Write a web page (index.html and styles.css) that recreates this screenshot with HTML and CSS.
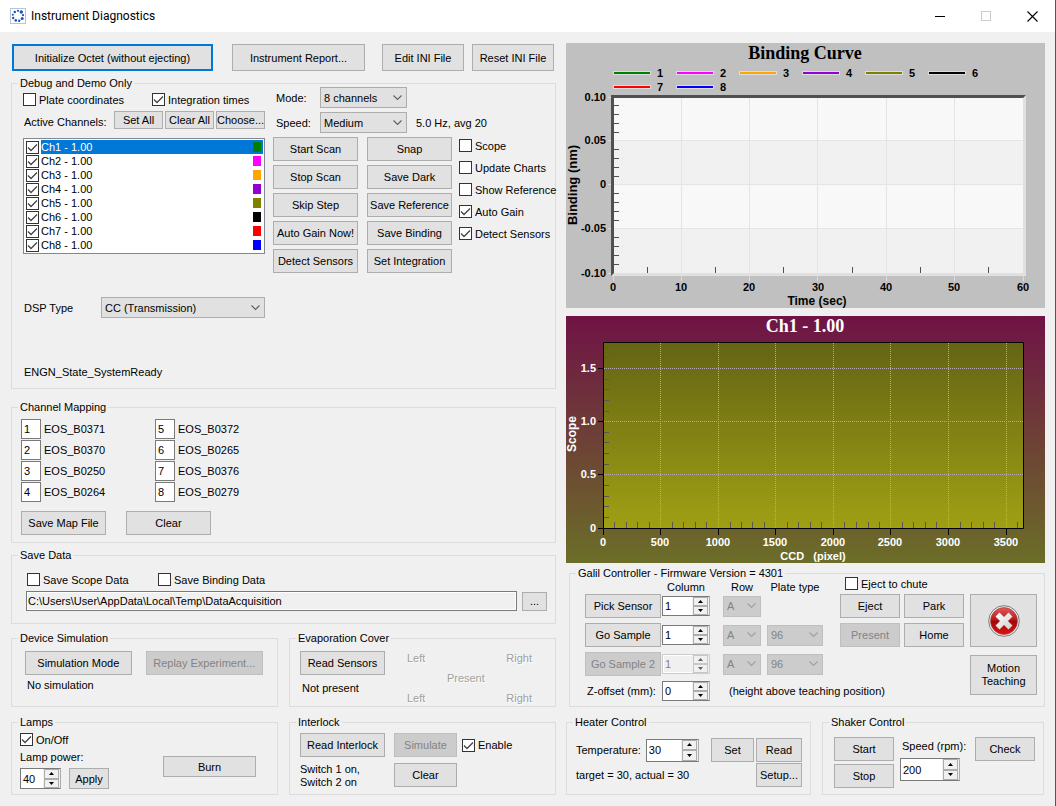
FILE: index.html
```html
<!DOCTYPE html>
<html lang="en">
<head>
<meta charset="utf-8">
<title>Instrument Diagnostics</title>
<link rel="stylesheet" href="styles.css">
</head>
<body>
<header class="titlebar">
  <svg class="app-icon" width="16" height="16" viewBox="0 0 16 16" aria-hidden="true">
    <rect x=".5" y=".5" width="15" height="15" fill="#fff" stroke="#b4c6d6"/>
    <g fill="#1f4fc8">
      <circle cx="8" cy="2.8" r="1.1"/><circle cx="11.3" cy="4" r="1.7"/><circle cx="13" cy="7.2" r="1.1"/><circle cx="12.2" cy="10.6" r="1.5"/>
      <circle cx="9.2" cy="12.8" r="1.2"/><circle cx="5.8" cy="12.4" r="1.3"/><circle cx="3.2" cy="10" r="1.2"/><circle cx="2.8" cy="6.8" r="1"/><circle cx="4.8" cy="4" r="1.2"/>
    </g>
  </svg>
  <h1>Instrument Diagnostics</h1>
  <div class="window-buttons">
    <button aria-label="Minimize"><svg width="11" height="11" viewBox="0 0 11 11"><path d="M0 5.5h10" stroke="#000"/></svg></button>
    <button aria-label="Maximize"><svg width="11" height="11" viewBox="0 0 11 11"><rect x=".5" y=".5" width="9" height="9" fill="none" stroke="#ccc"/></svg></button>
    <button aria-label="Close"><svg width="11" height="11" viewBox="0 0 11 11"><path d="M.5.5l10 10M10.5.5l-10 10" stroke="#000" stroke-width="1.1"/></svg></button>
  </div>
</header>

<main class="panes">
  <div class="pane-left">
    <div class="top-buttons">
      <button class="btn btn-default init">Initialize Octet (without ejecting)</button>
      <button class="btn report">Instrument Report...</button>
      <button class="btn ini">Edit INI File</button>
      <button class="btn ini">Reset INI File</button>
    </div>

    <fieldset class="group debug">
      <legend>Debug and Demo Only</legend>
      <div class="debug-body">
        <div class="channels">
          <div class="check-pair">
            <label class="check"><input type="checkbox">Plate coordinates</label>
            <label class="check"><input type="checkbox" checked>Integration times</label>
          </div>
          <div class="active-row">
            <span>Active Channels:</span>
            <button class="btn">Set All</button>
            <button class="btn">Clear All</button>
            <button class="btn">Choose...</button>
          </div>
          <ul class="channel-list">
            <li class="selected"><label class="check"><input type="checkbox" checked><span>Ch1 - 1.00</span></label><i class="swatch green"></i></li>
            <li><label class="check"><input type="checkbox" checked><span>Ch2 - 1.00</span></label><i class="swatch magenta"></i></li>
            <li><label class="check"><input type="checkbox" checked><span>Ch3 - 1.00</span></label><i class="swatch orange"></i></li>
            <li><label class="check"><input type="checkbox" checked><span>Ch4 - 1.00</span></label><i class="swatch violet"></i></li>
            <li><label class="check"><input type="checkbox" checked><span>Ch5 - 1.00</span></label><i class="swatch olive"></i></li>
            <li><label class="check"><input type="checkbox" checked><span>Ch6 - 1.00</span></label><i class="swatch black"></i></li>
            <li><label class="check"><input type="checkbox" checked><span>Ch7 - 1.00</span></label><i class="swatch red"></i></li>
            <li><label class="check"><input type="checkbox" checked><span>Ch8 - 1.00</span></label><i class="swatch blue"></i></li>
          </ul>
          <div class="dsp-row">
            <label for="dsp">DSP Type</label>
            <select id="dsp"><option>CC (Transmission)</option></select>
          </div>
          <p class="state">ENGN_State_SystemReady</p>
        </div>

        <div class="scan">
          <div class="scan-settings">
            <label for="mode">Mode:</label>
            <select id="mode"><option>8 channels</option></select>
            <span></span>
            <label for="speed">Speed:</label>
            <select id="speed"><option>Medium</option></select>
            <span>5.0 Hz, avg 20</span>
          </div>
          <div class="scan-controls">
            <div class="scan-buttons">
              <button class="btn">Start Scan</button><button class="btn">Snap</button>
              <button class="btn">Stop Scan</button><button class="btn">Save Dark</button>
              <button class="btn">Skip Step</button><button class="btn">Save Reference</button>
              <button class="btn">Auto Gain Now!</button><button class="btn">Save Binding</button>
              <button class="btn">Detect Sensors</button><button class="btn">Set Integration</button>
            </div>
            <div class="scan-checks">
              <label class="check"><input type="checkbox">Scope</label>
              <label class="check"><input type="checkbox">Update Charts</label>
              <label class="check"><input type="checkbox">Show Reference</label>
              <label class="check"><input type="checkbox" checked>Auto Gain</label>
              <label class="check"><input type="checkbox" checked>Detect Sensors</label>
            </div>
          </div>
        </div>
      </div>
    </fieldset>

    <fieldset class="group mapping">
      <legend>Channel Mapping</legend>
      <div class="mapping-body">
        <div class="map-grid">
          <div class="map-item"><input id="m1" type="text" value="1"><label for="m1">EOS_B0371</label></div>
          <div class="map-item"><input id="m5" type="text" value="5"><label for="m5">EOS_B0372</label></div>
          <div class="map-item"><input id="m2" type="text" value="2"><label for="m2">EOS_B0370</label></div>
          <div class="map-item"><input id="m6" type="text" value="6"><label for="m6">EOS_B0265</label></div>
          <div class="map-item"><input id="m3" type="text" value="3"><label for="m3">EOS_B0250</label></div>
          <div class="map-item"><input id="m7" type="text" value="7"><label for="m7">EOS_B0376</label></div>
          <div class="map-item"><input id="m4" type="text" value="4"><label for="m4">EOS_B0264</label></div>
          <div class="map-item"><input id="m8" type="text" value="8"><label for="m8">EOS_B0279</label></div>
        </div>
        <div class="map-buttons">
          <button class="btn">Save Map File</button>
          <button class="btn">Clear</button>
        </div>
      </div>
    </fieldset>

    <fieldset class="group save">
      <legend>Save Data</legend>
      <div class="save-body">
        <div class="check-pair">
          <label class="check"><input type="checkbox">Save Scope Data</label>
          <label class="check"><input type="checkbox">Save Binding Data</label>
        </div>
        <div class="path-row">
          <input type="text" readonly aria-label="Data folder" value="C:\Users\User\AppData\Local\Temp\DataAcquisition">
          <button class="btn" aria-label="Browse">...</button>
        </div>
      </div>
    </fieldset>

    <div class="pair devices">
      <fieldset class="group">
        <legend>Device Simulation</legend>
        <div class="sim-body">
          <div class="sim-buttons">
            <button class="btn">Simulation Mode</button>
            <button class="btn" disabled>Replay Experiment...</button>
          </div>
          <p>No simulation</p>
        </div>
      </fieldset>
      <fieldset class="group">
        <legend>Evaporation Cover</legend>
        <div class="evap-body">
          <div class="evap-read">
            <button class="btn">Read Sensors</button>
            <p>Not present</p>
          </div>
          <div class="evap-states">
            <span>Left</span><span></span><span>Right</span>
            <span></span><span>Present</span><span></span>
            <span>Left</span><span></span><span>Right</span>
          </div>
        </div>
      </fieldset>
    </div>

    <div class="pair lamps">
      <fieldset class="group">
        <legend>Lamps</legend>
        <div class="lamps-body">
          <div>
            <label class="check"><input type="checkbox" checked>On/Off</label>
            <label class="lamp-label" for="lamp">Lamp power:</label>
            <div class="lamp-row">
              <span class="spin"><input id="lamp" type="number" value="40"><span class="arrows"><button aria-label="Up"></button><button aria-label="Down"></button></span></span>
              <button class="btn">Apply</button>
            </div>
          </div>
          <button class="btn burn">Burn</button>
        </div>
      </fieldset>
      <fieldset class="group">
        <legend>Interlock</legend>
        <div class="interlock-body">
          <button class="btn">Read Interlock</button>
          <button class="btn" disabled>Simulate</button>
          <label class="check"><input type="checkbox" checked>Enable</label>
          <p>Switch 1 on,<br>Switch 2 on</p>
          <button class="btn">Clear</button>
        </div>
      </fieldset>
    </div>
  </div>

  <div class="pane-right">
    <svg class="chart" viewBox="0 0 479 265" role="img" aria-label="Binding Curve">
      <rect width="479" height="265" fill="#c0c0c0"/>
      <text class="chart-title" x="239" y="16" text-anchor="middle">Binding Curve</text>
      <g fill="none" stroke-width="4" stroke="#dcdcdc">
        <path d="M47 30h38M110 30h38M173 30h38M236 30h38M299 30h38M362 30h38M47 44h38M110 44h38"/>
        <g stroke-width="2">
          <path stroke="#008000" d="M48 30h36"/><path stroke="#ff00ff" d="M111 30h36"/><path stroke="#ffa500" d="M174 30h36"/>
          <path stroke="#9400d3" d="M237 30h36"/><path stroke="#808000" d="M300 30h36"/><path stroke="#000" d="M363 30h36"/>
          <path stroke="#f00" d="M48 44h36"/><path stroke="#00f" d="M111 44h36"/>
        </g>
      </g>
      <g class="chart-label" text-anchor="middle">
        <text x="94" y="34">1</text><text x="157" y="34">2</text><text x="220" y="34">3</text><text x="283" y="34">4</text><text x="346" y="34">5</text><text x="409" y="34">6</text>
        <text x="94" y="48">7</text><text x="157" y="48">8</text>
      </g>
      <rect x="48" y="55" width="409" height="175" fill="#f8f8f8"/>
      <path fill="#f1f1f1" d="M48 98h409v43H48zM48 186h409v44H48z"/>
      <path fill="none" stroke="#e4e4e4" d="M48 97.5h409M48 141.5h409M48 185.5h409M115.5 55v175M183.5 55v175M251.500 55v175M320.500 55v175M388.500 55v175"/>
      <path fill="#e0e0e0" d="M460 52v181H45l3-3h409V55z"/>
      <path fill="#505050" d="M45 233V52h415l-3 3H48v175z"/>
      <path fill="none" stroke="#505050" d="M48 62.500h5M48 71.500h5M48 80.500h5M48 89.500h5M48 106.500h5M48 115.500h5M48 124.500h5M48 133.500h5M48 150.500h5M48 159.500h5M48 168.500h5M48 177.500h5M48 194.500h5M48 203.500h5M48 212.500h5M48 221.500h5M81.500 224v6M149.500 224v6M217.500 224v6M286.500 224v6M354.500 224v6M422.500 224v6"/>
      <path fill="none" stroke="#dcdcdc" d="M42 54.500h3M42 97.500h3M42 141.500h3M42 185.500h3M42 230.500h3M47.500 233v5M115.500 233v5M183.500 233v5M251.500 233v5M320.500 233v5M388.500 233v5M457.500 233v5"/>
      <g class="chart-label" text-anchor="end">
        <text x="40" y="58">0.10</text><text x="40" y="101">0.05</text><text x="40" y="145">0</text><text x="40" y="189">-0.05</text><text x="40" y="234">-0.10</text>
      </g>
      <g class="chart-label" text-anchor="middle">
        <text x="47" y="248">0</text><text x="115" y="248">10</text><text x="183" y="248">20</text><text x="252" y="248">30</text><text x="320" y="248">40</text><text x="388" y="248">50</text><text x="457" y="248">60</text>
      </g>
      <text class="chart-axis" x="251" y="262" text-anchor="middle">Time (sec)</text>
      <text class="chart-axis tall" transform="translate(11 142) rotate(-90)" text-anchor="middle">Binding (nm)</text>
    </svg>

    <svg class="chart scope" viewBox="0 0 479 247" role="img" aria-label="Ch1 - 1.00">
      <defs>
        <linearGradient id="back" x2="0" y2="1"><stop stop-color="#701345"/><stop offset="1" stop-color="#6b6e28"/></linearGradient>
        <linearGradient id="plot" x2="0" y2="1"><stop stop-color="#646414"/><stop offset="1" stop-color="#a0a014"/></linearGradient>
      </defs>
      <rect width="479" height="247" fill="url(#back)"/>
      <text class="chart-title" x="239" y="16" text-anchor="middle">Ch1 - 1.00</text>
      <rect x="37.500" y="26.500" width="420" height="186" fill="url(#plot)"/>
      <path fill="none" stroke="#b4a8b4" stroke-dasharray="1 1" d="M38 52.500h419M38 105.500h419M38 158.500h419M94.500 27v185M152.500 27v185M209.500 27v185M267.500 27v185M324.500 27v185M382.500 27v185M440.500 27v185"/>
      <path fill="none" stroke="#585850" d="M38 31.500h5M38 41.500h5M38 63.500h5M38 73.500h5M38 84.500h5M38 95.500h5M38 116.500h5M38 126.500h5M38 137.500h5M38 148.500h5M38 169.500h5M38 180.500h5M38 190.500h5M38 201.500h5M48.500 206v6M60.500 206v6M71.500 206v6M83.500 206v6M106.500 206v6M117.500 206v6M129.500 206v6M140.500 206v6M164.500 206v6M175.500 206v6M186.500 206v6M198.500 206v6M221.500 206v6M232.500 206v6M244.500 206v6M255.500 206v6M278.500 206v6M290.500 206v6M302.500 206v6M313.500 206v6M336.500 206v6M347.500 206v6M359.500 206v6M370.500 206v6M394.500 206v6M405.500 206v6M417.500 206v6M428.500 206v6M451.500 206v6"/>
      <path fill="none" stroke="#000" d="M37.500 26.500h420v186h-420zM32 52.500h5M32 105.500h5M32 158.500h5M32 212.500h5M37.500 213v6M94.500 213v6M152.500 213v6M209.500 213v6M267.500 213v6M324.500 213v6M382.500 213v6M440.500 213v6"/>
      <g class="chart-label" text-anchor="end">
        <text x="30" y="56">1.5</text><text x="30" y="109">1.0</text><text x="30" y="162">0.5</text><text x="30" y="216">0</text>
      </g>
      <g class="chart-label" text-anchor="middle">
        <text x="37" y="230">0</text><text x="94" y="230">500</text><text x="152" y="230">1000</text><text x="209" y="230">1500</text><text x="267" y="230">2000</text><text x="324" y="230">2500</text><text x="382" y="230">3000</text><text x="440" y="230">3500</text>
        <text class="spaced" x="247" y="244">CCD   (pixel)</text>
      </g>
      <text class="chart-axis" transform="translate(10 118) rotate(-90)" text-anchor="middle">Scope</text>
    </svg>

    <fieldset class="group galil">
      <legend>Galil Controller - Firmware Version = 4301</legend>
      <div class="galil-body">
        <div class="samples">
          <span></span><span class="head">Column</span><span class="head">Row</span><span class="head">Plate type</span>

          <button class="btn">Pick Sensor</button>
          <span class="spin"><input type="number" value="1" aria-label="Sensor column"><span class="arrows"><button aria-label="Up"></button><button aria-label="Down"></button></span></span>
          <select disabled aria-label="Sensor row"><option>A</option></select>
          <span></span>

          <button class="btn">Go Sample</button>
          <span class="spin"><input type="number" value="1" aria-label="Sample column"><span class="arrows"><button aria-label="Up"></button><button aria-label="Down"></button></span></span>
          <select disabled aria-label="Sample row"><option>A</option></select>
          <select disabled aria-label="Sample plate type"><option>96</option></select>

          <button class="btn" disabled>Go Sample 2</button>
          <span class="spin off"><input type="number" value="1" disabled aria-label="Sample 2 column"><span class="arrows"><button disabled aria-label="Up"></button><button disabled aria-label="Down"></button></span></span>
          <select disabled aria-label="Sample 2 row"><option>A</option></select>
          <select disabled aria-label="Sample 2 plate type"><option>96</option></select>

          <label class="z-label" for="z">Z-offset (mm):</label>
          <span class="spin"><input id="z" type="number" value="0"><span class="arrows"><button aria-label="Up"></button><button aria-label="Down"></button></span></span>
          <span class="z-note">(height above teaching position)</span>
        </div>
        <div class="motion">
          <label class="check"><input type="checkbox">Eject to chute</label>
          <button class="btn">Eject</button>
          <button class="btn">Park</button>
          <button class="btn stop" aria-label="Stop">
            <svg width="32" height="32" viewBox="0 0 32 32" aria-hidden="true">
              <defs><linearGradient id="red" x2="0" y2="1"><stop stop-color="#e25a5a"/><stop offset=".45" stop-color="#b81a1a"/><stop offset=".5" stop-color="#a00808"/><stop offset="1" stop-color="#dc1414"/></linearGradient>
              <linearGradient id="cross" x2="1" y2="1"><stop stop-color="#fff"/><stop offset="1" stop-color="#cfcfcf"/></linearGradient></defs>
              <circle cx="16" cy="16" r="15.300" fill="#f4f4f4" stroke="#777"/>
              <circle cx="16" cy="16" r="13.500" fill="url(#red)" stroke="#a33" stroke-width=".6"/>
              <path d="M11.500 7.500L16 12l4.500-4.500 4 4L20 16l4.500 4.500-4 4L16 20l-4.500 4.500-4-4L12 16l-4.500-4.500z" fill="url(#cross)"/>
            </svg>
          </button>
          <button class="btn" disabled>Present</button>
          <button class="btn">Home</button>
          <button class="btn teach">Motion<br>Teaching</button>
        </div>
      </div>
    </fieldset>

    <div class="controls">
      <fieldset class="group">
        <legend>Heater Control</legend>
        <div class="heater-body">
          <div class="heater-info">
            <div class="heater-temp">
              <label for="temp">Temperature:</label>
              <span class="spin"><input id="temp" type="number" value="30"><span class="arrows"><button aria-label="Up"></button><button aria-label="Down"></button></span></span>
            </div>
            <p>target = 30, actual = 30</p>
          </div>
          <div class="heater-buttons">
            <button class="btn">Set</button>
            <button class="btn">Read</button>
            <button class="btn setup">Setup...</button>
          </div>
        </div>
      </fieldset>
      <fieldset class="group">
        <legend>Shaker Control</legend>
        <div class="shaker-body">
          <div class="shaker-run">
            <button class="btn">Start</button>
            <button class="btn">Stop</button>
          </div>
          <div class="shaker-speed">
            <label for="rpm">Speed (rpm):</label>
            <span class="spin"><input id="rpm" type="number" value="200"><span class="arrows"><button aria-label="Up"></button><button aria-label="Down"></button></span></span>
          </div>
          <button class="btn check-btn">Check</button>
        </div>
      </fieldset>
    </div>
  </div>
</main>
</body>
</html>
```
FILE: styles.css
```css
* { box-sizing: border-box; }

body {
  margin: 0;
  min-height: 100vh;
  background: #f0f0f0;
  border-right: 1px solid #555;
  color: #000;
  font: 11px/14px "Liberation Sans", Arial, sans-serif;
}

button, input, select { font: inherit; color: inherit; margin: 0; }
p { margin: 0; }

/* Title bar */
.titlebar { display: flex; align-items: center; height: 32px; padding-left: 10px; background: #fff; }
.titlebar h1 { margin: 0 auto 0 5px; font: 12px/16px Roboto, sans-serif; }
.window-buttons { display: flex; }
.window-buttons button { width: 46px; height: 32px; padding: 0; border: 0; background: none; }
.window-buttons svg { display: block; margin: 0 auto; }

/* Page frame */
.panes { display: grid; grid-template-columns: 545fr 479fr; column-gap: 10px; padding: 11px 10px 11px 11px; }
.pane-left, .pane-right { min-width: 0; }

/* Buttons */
.btn {
  height: 24px;
  padding: 0;
  border: 1px solid #adadad;
  border-radius: 0;
  background: #e1e1e1;
  white-space: nowrap;
}
.btn:disabled { background: #ccc; border-color: #bfbfbf; color: #838383; }
.btn-default { border: 2px solid #0078d7; }

.top-buttons { display: flex; padding: 1px 2px 0 1px; }
.top-buttons .btn { height: 27px; }
.init { width: 201px; margin-right: 19px; }
.report { width: 133px; margin-right: 17px; }
.ini { width: 82px; }
.ini + .ini { margin-left: 8px; }

/* Group boxes: the caption straddles the top border */
.group { min-width: 0; margin: 0; padding: 0; border: 1px solid #dcdcdc; }
.group > legend { height: 1px; margin-left: 6px; padding: 0 2px; line-height: 1px; white-space: nowrap; }

/* Tick boxes */
.check { display: flex; align-items: center; gap: 3px; height: 13px; white-space: nowrap; }
.check input {
  appearance: none;
  flex: none;
  width: 13px;
  height: 13px;
  border: 1px solid #333;
  background: #fff;
}
.check input:checked {
  background: #fff url("data:image/svg+xml,%3Csvg xmlns='http://www.w3.org/2000/svg' viewBox='0 0 11 11'%3E%3Cpath d='M1 5.500l3 3 6-6' fill='none' stroke='%23444' stroke-width='1.300'/%3E%3C/svg%3E") center / 11px 11px no-repeat;
}

/* Drop-downs */
select {
  appearance: none;
  height: 21px;
  padding: 0 18px 0 3px;
  border: 1px solid #adadad;
  border-radius: 0;
  background: #e1e1e1 url("data:image/svg+xml,%3Csvg xmlns='http://www.w3.org/2000/svg' viewBox='0 0 9 6'%3E%3Cpath d='M.5.5l4 4 4-4' fill='none' stroke='%23606060' stroke-width='1.100'/%3E%3C/svg%3E") right 4px center / 9px 6px no-repeat;
}
select:disabled {
  border-color: #bfbfbf;
  color: #838383;
  opacity: 1;
  background-color: #ccc;
  background-image: url("data:image/svg+xml,%3Csvg xmlns='http://www.w3.org/2000/svg' viewBox='0 0 9 6'%3E%3Cpath d='M.5.5l4 4 4-4' fill='none' stroke='%23a0a0a0' stroke-width='1.100'/%3E%3C/svg%3E");
}

/* Text boxes */
input[type="text"] { border: 1px solid #7a7a7a; border-radius: 0; background: #fff; }

/* Number boxes with up and down buttons */
.spin { display: flex; width: 48px; height: 20px; border: 1px solid #7a7a7a; border-right-color: #adadad; background: #fff; }
.spin input { flex: 1; min-width: 0; padding: 0 0 0 2px; border: 0; background: none; appearance: textfield; }
.spin input::-webkit-inner-spin-button { appearance: none; margin: 0; }
.arrows { display: flex; flex-direction: column; width: 17px; padding: 0 1px; background: #f0f0f0; }
.arrows button {
  flex: 1;
  min-height: 0;
  padding: 0;
  border: 1px solid #adadad;
  background: #f0f0f0 url("data:image/svg+xml,%3Csvg xmlns='http://www.w3.org/2000/svg' viewBox='0 0 5 3'%3E%3Cpath d='M0 3l2.500-3L5 3z'/%3E%3C/svg%3E") center / 5px 3px no-repeat;
}
.arrows button:last-child {
  background-image: url("data:image/svg+xml,%3Csvg xmlns='http://www.w3.org/2000/svg' viewBox='0 0 5 3'%3E%3Cpath d='M0 0l2.500 3L5 0z'/%3E%3C/svg%3E");
}
.spin.off { border-color: #ccc; background: #f0f0f0; color: #838383; box-shadow: inset 0 0 0 1px #fff; }
.off .arrows button { opacity: .6; }

/* Debug and Demo Only */
.debug { margin-top: 12px; }
.debug-body { display: grid; grid-template-columns: 1fr auto; column-gap: 8px; padding: 3px 0 9px 11px; }
.channels { padding-top: 6px; }
.check-pair { display: grid; grid-template-columns: 129px auto; justify-content: start; }
.active-row { display: flex; gap: 2px; height: 18px; margin-top: 5px; padding-left: 1px; line-height: 22px; white-space: nowrap; }
.active-row span { margin-right: auto; }
.active-row .btn { width: 49px; height: 18px; line-height: 14px; }
.channel-list { list-style: none; margin: 9px 0 0; padding: 1px; border: 1px solid #828790; background: #fff; }
.channel-list li { display: flex; align-items: center; justify-content: space-between; height: 14px; padding: 0 2px 0 1px; }
.channel-list .check { gap: 2px; }
.channel-list .selected { color: #fff; background: linear-gradient(#0078d7, #0078d7) 16px 0 no-repeat; }
.swatch { width: 8px; height: 10px; }
.green { background: #008000; }
.magenta { background: #f0f; }
.orange { background: #ffa500; }
.violet { background: #9400d3; }
.olive { background: #808000; }
.black { background: #000; }
.red { background: #f00; }
.blue { background: #00f; }
.dsp-row { display: flex; align-items: center; margin-top: 43px; padding-left: 1px; }
.dsp-row label { width: 77px; }
.dsp-row select { flex: 1; }
.state { margin-top: 47px; padding-left: 1px; }

.scan-settings { display: grid; grid-template-columns: 44px 87px auto; row-gap: 4px; padding-left: 3px; align-items: center; }
.scan-settings span { padding-left: 9px; }
.scan-controls { display: flex; gap: 7px; margin-top: 4px; }
.scan-buttons { display: grid; grid-template-columns: 85px 85px; gap: 4px 9px; }
.scan-checks { display: flex; flex-direction: column; gap: 9px; width: 96px; padding-top: 2px; }

/* Channel Mapping */
.mapping { margin-top: 18px; }
.mapping-body { padding: 11px 9px 7px; }
.map-grid { display: grid; grid-template-columns: 134px auto; gap: 1px 0; justify-content: start; }
.map-item { display: flex; align-items: center; gap: 3px; }
.map-item input { width: 20px; height: 20px; padding: 0 2px; }
.map-buttons { display: flex; gap: 20px; margin-top: 9px; }
.map-buttons .btn { width: 85px; }

/* Save Data */
.save { margin-top: 12px; }
.save-body { padding: 17px 8px 12px 14px; }
.save .check-pair { grid-template-columns: 131px auto; padding-left: 1px; }
.path-row { display: flex; align-items: center; gap: 5px; margin-top: 5px; }
.path-row input { flex: 1; min-width: 0; height: 20px; padding: 0 1px; background: #f0f0f0; box-shadow: inset 0 0 0 1px #fff; }
.path-row .btn { width: 25px; height: 19px; }

/* Device Simulation and Evaporation Cover */
.pair { display: grid; grid-template-columns: 1fr 1fr; column-gap: 11px; }
.devices { margin-top: 14px; }
.lamps { margin-top: 15px; }
.sim-body { padding: 12px 14px 14px 13px; }
.sim-buttons { display: flex; gap: 14px; }
.sim-buttons .btn { flex: 106 1 0; }
.sim-buttons .btn:last-child { flex-grow: 117; }
.sim-body p { margin-top: 3px; padding-left: 2px; }
.evap-body { display: flex; gap: 22px; padding: 12px 23px 0 10px; }
.evap-read .btn { width: 85px; }
.evap-read p { margin-top: 6px; padding-left: 2px; }
.evap-states {
  flex: 1;
  display: grid;
  grid-template-columns: auto auto auto;
  grid-template-rows: repeat(3, 14px);
  align-content: start;
  justify-content: space-between;
  row-gap: 6px;
  color: #a0a0a0;
  text-shadow: 1px 1px #fff;
}

/* Lamps and Interlock */
.lamps-body { display: flex; justify-content: space-between; padding: 10px 21px 5px 8px; }
.lamp-label { display: block; margin: 4px 0; }
.lamp-row { display: flex; gap: 8px; }
.lamp-row .spin { width: 41px; height: 21px; }
.lamp-row .btn { width: 40px; height: 21px; }
.burn { width: 93px; height: 21px; margin-top: 23px; }
.interlock-body { display: grid; grid-template-columns: 85px 63px auto; gap: 6px 9px; justify-content: start; padding: 10px 10px 5px 10px; }
.interlock-body .check { align-self: center; margin-left: -4px; }
.interlock-body p { line-height: 13px; }

/* Charts */
.chart { display: block; width: 100%; height: auto; }
.chart-title { font: bold 18px "Liberation Serif", serif; }
.chart-label { font: bold 11px "Liberation Sans", sans-serif; }
.chart-axis { font: bold 12px "Liberation Sans", sans-serif; }
.chart-axis.tall { font-size: 13px; }
.scope { margin-top: 8px; }
.scope text { fill: #fff; }
.spaced { white-space: pre; }

/* Galil Controller */
.galil { margin: 10px 0 0 3px; }
.galil-body { display: flex; justify-content: space-between; padding: 3px 7px 5px 15px; }
.samples { display: grid; grid-template-columns: 77px 61px 44px 56px; grid-template-rows: 12px repeat(3, 24px) 20px; row-gap: 5px; align-items: center; }
.samples .btn { width: 76px; }
.samples select { width: 38px; padding-right: 0; }
.samples select:nth-child(4n) { width: 56px; }
.head { width: 48px; align-self: end; margin-bottom: -5px; text-align: center; }
.head + .head { width: 38px; }
.head + .head + .head { width: 56px; white-space: nowrap; }
.z-label { padding-left: 2px; white-space: nowrap; }
.z-note { padding-left: 6px; white-space: nowrap; }
.motion { display: grid; grid-template-columns: 60px 60px 69px; grid-template-rows: 12px 24px 24px 43px; gap: 5px 4px; align-content: start; justify-content: end; }
.motion .check { grid-column: 1 / 4; margin-left: 5px; }
.motion .stop { grid-area: 2 / 3 / 4 / 4; height: auto; margin-left: 2px; }
.motion .stop svg { display: block; margin: 0 auto; }
.motion .teach { grid-area: 4 / 3; height: auto; margin: 3px 0 0 2px; line-height: 13px; }

/* Heater and Shaker */
.controls { display: grid; grid-template-columns: 245fr 222fr; column-gap: 11px; margin-top: 15px; padding-right: 1px; }
.heater-body { display: flex; justify-content: space-between; padding: 15px 8px 7px 9px; }
.heater-temp { display: flex; align-items: center; justify-content: space-between; gap: 5px; height: 24px; }
.heater-info { width: 122px; }
.heater-info p { margin-top: 6px; white-space: nowrap; }
.heater-info .spin { width: 53px; height: 23px; }
.heater-buttons { display: grid; grid-template-columns: 43px 46px; gap: 1px 2px; }
.setup { grid-column: 2; }
.shaker-body { display: flex; padding: 14px 8px 6px 11px; }
.shaker-run { display: grid; row-gap: 3px; }
.shaker-run .btn, .check-btn { width: 60px; }
.shaker-speed { width: 60px; margin: 0 auto 0 6px; }
.shaker-speed label { display: block; margin: 2px 0 5px 2px; white-space: nowrap; }
.shaker-speed .spin { width: 60px; height: 23px; }
```
